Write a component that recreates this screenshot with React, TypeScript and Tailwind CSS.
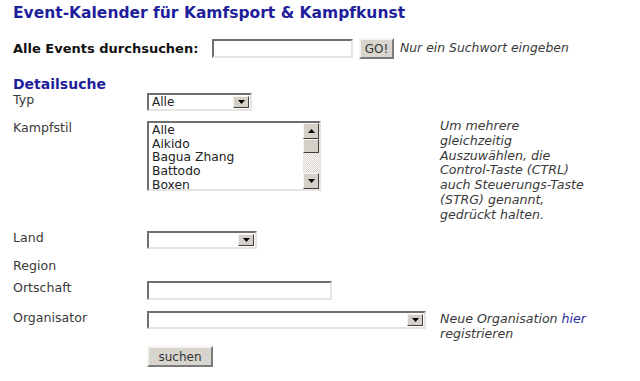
import React from "react";

const FONT = "font-['DejaVu_Sans','Liberation_Sans',sans-serif]";

function DropArrow() {
  return (
    <div className="flex h-full w-[16px] items-center justify-center border border-t-[#f4f3ee] border-l-[#f4f3ee] border-b-[#404040] border-r-[#404040] bg-[#d4d0c8]">
      <svg width="7" height="4" viewBox="0 0 7 4">
        <path d="M0 0h7L3.5 4z" fill="#000" />
      </svg>
    </div>
  );
}

function Select({ width, value }: { width: string; value?: string }) {
  return (
    <div
      className={`flex h-[18px] ${width} items-stretch border-2 border-t-[#6f6f6f] border-l-[#6f6f6f] border-b-[#e6e4de] border-r-[#e6e4de] bg-white p-px`}
    >
      <div className="flex-1 pl-[2px] text-[12px] leading-[13px] text-[#222]">{value}</div>
      <DropArrow />
    </div>
  );
}

function TextInput({ width }: { width: string }) {
  return (
    <div
      className={`h-[19px] ${width} border-2 border-t-[#6f6f6f] border-l-[#6f6f6f] border-b-[#e6e4de] border-r-[#e6e4de] bg-white`}
    />
  );
}

function Button({ label, width }: { label: string; width: string }) {
  return (
    <div
      className={`flex h-[21px] ${width} items-center justify-center border-2 border-t-[#f4f3ee] border-l-[#f4f3ee] border-b-[#7a7a7a] border-r-[#7a7a7a] bg-[#d8d5ce] text-[12px] text-[#333]`}
    >
      {label}
    </div>
  );
}

const styles = ["Alle", "Aikido", "Bagua Zhang", "Battodo", "Boxen"];

function ListBox() {
  return (
    <div className="flex h-[70px] w-[174px] border-2 border-t-[#6f6f6f] border-l-[#6f6f6f] border-b-[#e6e4de] border-r-[#e6e4de] bg-white">
      <div className="flex-1 pl-[3px] pt-px text-[12.3px] leading-[13.7px] text-[#222]">
        {styles.map((s) => (
          <div key={s}>{s}</div>
        ))}
      </div>
      <div className="flex w-[16px] flex-col bg-[#ecebe6]">
        <div className="flex h-[16px] items-center justify-center border border-t-[#f4f3ee] border-l-[#f4f3ee] border-b-[#404040] border-r-[#404040] bg-[#d4d0c8]">
          <svg width="7" height="4" viewBox="0 0 7 4">
            <path d="M3.5 0L7 4H0z" fill="#000" />
          </svg>
        </div>
        <div className="h-[14px] border border-t-[#f4f3ee] border-l-[#f4f3ee] border-b-[#404040] border-r-[#404040] bg-[#d4d0c8]" />
        <div className="flex-1 bg-[repeating-conic-gradient(#d4d0c8_0%_25%,#ffffff_0%_50%)] bg-[length:2px_2px]" />
        <div className="flex h-[16px] items-center justify-center border border-t-[#f4f3ee] border-l-[#f4f3ee] border-b-[#404040] border-r-[#404040] bg-[#d4d0c8]">
          <svg width="7" height="4" viewBox="0 0 7 4">
            <path d="M0 0h7L3.5 4z" fill="#000" />
          </svg>
        </div>
      </div>
    </div>
  );
}

function Label({ children }: { children: React.ReactNode }) {
  return <div className="w-[134px] shrink-0 text-[12.6px] leading-[14px] text-[#3a3a3a]">{children}</div>;
}

export default function App() {
  return (
    <div className={`h-[381px] w-[640px] bg-white pl-[13px] ${FONT}`}>
      <h1 className="pt-[3px] text-[15.5px] font-bold leading-[20px] text-[#1f1f9c]">
        Event-Kalender für Kamfsport &amp; Kampfkunst
      </h1>

      <div className="mt-[15px] flex h-[21px] items-center">
        <span className="w-[199px] text-[13px] font-bold text-[#111]">Alle Events durchsuchen:</span>
        <TextInput width="w-[141px]" />
        <div className="ml-[6px]">
          <Button label="GO!" width="w-[35px]" />
        </div>
        <span className="ml-[6px] text-[12.4px] italic text-[#3a3a3a]">Nur ein Suchwort eingeben</span>
      </div>

      <h2 className="mt-[17px] text-[14px] font-bold leading-[16px] text-[#1f1f9c]">Detailsuche</h2>

      <div className="mt-px flex h-[18px]">
        <Label>Typ</Label>
        <Select width="w-[105px]" value="Alle" />
      </div>

      <div className="mt-[10px] flex h-[103px]">
        <Label>Kampfstil</Label>
        <div className="w-[293px] shrink-0">
          <ListBox />
        </div>
        <div className="-mt-[2px] text-[12.6px] italic leading-[14.8px] text-[#3a3a3a]">
          Um mehrere
          <br />
          gleichzeitig
          <br />
          Auszuwählen, die
          <br />
          Control-Taste (CTRL)
          <br />
          auch Steuerungs-Taste
          <br />
          (STRG) genannt,
          <br />
          gedrückt halten.
        </div>
      </div>

      <div className="mt-[7px] flex h-[18px]">
        <Label>Land</Label>
        <Select width="w-[110px]" />
      </div>

      <div className="mt-[10px] flex h-[14px]">
        <Label>Region</Label>
      </div>

      <div className="mt-[8px] flex h-[19px]">
        <Label>Ortschaft</Label>
        <TextInput width="w-[185px]" />
      </div>

      <div className="mt-[11px] flex h-[18px]">
        <Label>Organisator</Label>
        <div className="w-[293px] shrink-0">
          <Select width="w-[279px]" />
        </div>
        <div className="mt-px text-[12.6px] italic leading-[14.8px] text-[#3a3a3a]">
          Neue Organisation <span className="text-[#2a2a9c]">hier</span>
          <br />
          registrieren
        </div>
      </div>

      <div className="mt-[17px] flex">
        <div className="w-[134px] shrink-0" />
        <Button label="suchen" width="w-[66px]" />
      </div>
    </div>
  );
}
